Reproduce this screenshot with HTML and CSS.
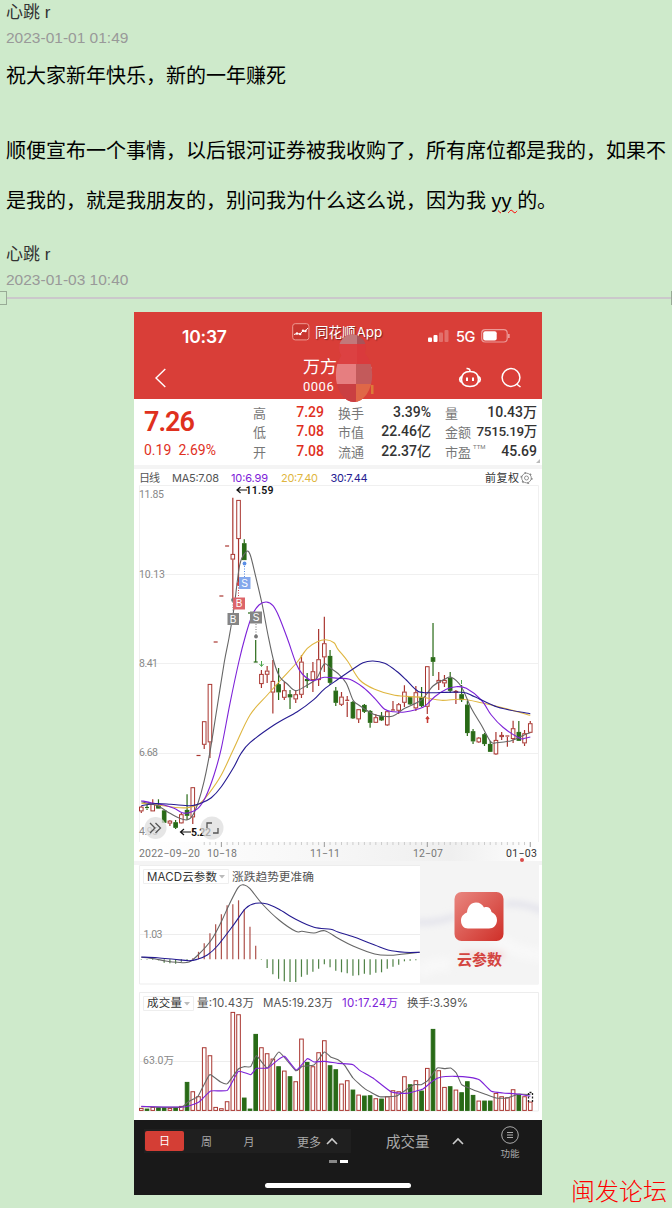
FILE: index.html
```html
<!DOCTYPE html>
<html lang="zh-CN">
<head>
<meta charset="utf-8">
<title>心跳 r</title>
<link rel="stylesheet" href="styles.css">
</head>
<body>
<main class="doc">
  <div class="name">心跳 r</div>
  <div class="date">2023-01-01 01:49</div>
  <p class="para">祝大家新年快乐，新的一年赚死</p>
  <p class="para para-long">顺便宣布一个事情，以后银河证券被我收购了，所有席位都是我的，如果不<br>是我的，就是我朋友的，别问我为什么这么说，因为我 <span class="typo">yy </span>的。</p>
  <div class="name">心跳 r</div>
  <div class="date">2023-01-03 10:40</div>
  <div class="rule"><i class="handle"></i><i class="line"></i><i class="handle end"></i></div>

  <section class="phone">
    <header class="top">
      <div class="status">
        <span class="clock">10:37</span>
        <span class="app">
          <svg width="18" height="18" viewBox="0 0 18 18"><rect x=".7" y=".7" width="16.2" height="16.2" rx="2.5" fill="#c8352f" stroke="#ee9a92"/><path d="M2 11.500l3-1 3 .7 3-3.400 2 .5L16 5" fill="none" stroke="#fff" stroke-width="1"/><g fill="#fff"><circle cx="5" cy="10.500" r="1.200"/><circle cx="8.200" cy="11" r="1.200"/><circle cx="11" cy="7.800" r="1.200"/><circle cx="13.500" cy="8" r="1.200"/></g></svg>
          <b>同花顺<em>App</em></b>
        </span>
        <svg class="signal" width="22" height="14" viewBox="0 0 22 14"><rect x="0" y="8.500" width="4" height="4.500" rx="1" fill="#fff"/><rect x="5.500" y="6" width="4" height="7" rx="1" fill="#fff"/><rect x="11" y="3.500" width="4" height="9.500" rx="1" fill="#e2706b"/><rect x="16.500" y="1" width="4" height="12" rx="1" fill="#e2706b"/></svg>
        <span class="net">5G</span>
        <svg width="30" height="14" viewBox="0 0 30 14"><rect x=".7" y=".7" width="25.500" height="12.300" rx="3.500" fill="none" stroke="#ec9a97" stroke-width="1.200"/><rect x="2.200" y="2.200" width="13.500" height="9.300" rx="2" fill="#fff"/><path d="M27.800 5v4" stroke="#ec9a97" stroke-width="1.800"/></svg>
      </div>
      <div class="titlebar">
        <svg class="back" width="14" height="22" viewBox="0 0 14 22"><path d="M11.300 2L2 11l9.300 9" fill="none" stroke="#fff" stroke-width="1.400"/></svg>
        <div class="stock"><span>万方</span><small>0006</small></div>
        <svg width="24" height="24" viewBox="0 0 24 24" fill="none" stroke="#fff" stroke-width="1.600"><path d="M12 5.500C6 5.500 3.500 9 3.500 13.500S6.500 20.500 12 20.500s8.500-2.500 8.500-7S18 5.500 12 5.500zM3.600 10.500c-2.600 1.200-2.600 4.800.2 5.700M20.400 10.500c2.600 1.200 2.600 4.800-.2 5.700M12 5.500c.3-2-1.200-3.200-3.500-3"/><path d="M9 11.500v3.500M15 11.500v3.500" stroke-width="2"/></svg>
        <svg class="search" width="24" height="24" viewBox="0 0 24 24" fill="none" stroke="#fff" stroke-width="1.500"><circle cx="11" cy="11.500" r="8.900"/><path d="M16.500 18l4 3"/></svg>
      </div>
      <svg class="blob" width="40" height="70" viewBox="335 333 40 70">
        <clipPath id="mask"><circle cx="352.500" cy="348" r="13.500"/><ellipse cx="354" cy="375" rx="18.200" ry="27"/></clipPath>
        <rect x="371" y="385" width="2.500" height="9" fill="#dd7a38"/><path d="M371.500 367v6" stroke="#efa7a3" stroke-dasharray="2 2"/>
        <g clip-path="url(#mask)"><rect x="335" y="333" width="40" height="70" fill="#da3a3c"/><path d="M335 333h22v11h-22z" fill="#c1797b"/><path d="M357 333h16v11h-16z" fill="#a95358"/><path d="M335 344h22v20h-22z" fill="#dc4142"/><path d="M335 364h21v20h-21z" fill="#e67e80"/><path d="M356 364h18v20h-18z" fill="#c35a5b"/><path d="M335 384h21v20h-21z" fill="#ca3f42"/><path d="M356 384h18v20h-18z" fill="#e06747"/></g>
      </svg>
    </header>

    <div class="quote">
      <div class="price"><strong>7.26</strong><span>0.19&ensp;2.69%</span></div>
      <dl class="stats">
        <dt>高</dt><dd class="red">7.29</dd><dt>换手</dt><dd>3.39%</dd><dt>量</dt><dd>10.43万</dd>
        <dt>低</dt><dd class="red">7.08</dd><dt>市值</dt><dd>22.46亿</dd><dt>金额</dt><dd class="tight">7515.19万</dd>
        <dt>开</dt><dd class="red">7.08</dd><dt>流通</dt><dd>22.37亿</dd><dt>市盈<sup>TTM</sup></dt><dd>45.69</dd>
      </dl>
      <i class="corner"></i>
    </div>

    <svg class="chart" id="kline" width="408" height="400" viewBox="134 465 408 400">
      <defs><linearGradient id="axis"><stop offset="0" stop-color="#fff"/><stop offset=".5" stop-color="#f6f6f6"/><stop offset=".78" stop-color="#efefef"/><stop offset="1" stop-color="#fff"/></linearGradient></defs>
      <path d="M134 465h408v4H134z" fill="#f4f4f4"/>
      <path d="M139.500 842V485.500h399V842M139 574.500h400M139 663.500h400M139 753.500h400" fill="none" stroke="#f0f0f0"/>
      <path d="M139 842h400v19H139z" fill="url(#axis)"/><path d="M134 861h408v4H134z" fill="#f4f4f4"/>
      <g class="t" font-size="11">
        <text x="139" y="481.500" textLength="21">日线</text><text x="172" y="481.500" textLength="47">MA5:7.08</text>
        <text x="231" y="481.500" textLength="37" fill="#7d22d8">10:6.99</text><text x="281" y="481.500" textLength="37" fill="#dfb640">20:7.40</text><text x="330.500" y="481.500" textLength="37" fill="#251b91">30:7.44</text>
        <text x="485" y="481.500" textLength="34" fill="#333">前复权</text>
      </g>
      <g fill="none" stroke="#888" stroke-width=".9"><circle cx="526.500" cy="478" r="4.800"/><circle cx="526.500" cy="478" r="5.400" stroke-dasharray="1.800 3.850" stroke-width="1.400"/><circle cx="526.500" cy="478" r="2"/></g>
      <g class="num" fill="#888">
        <text x="139" y="498" textLength="25">11.85</text><text x="139" y="577.500" textLength="26">10.13</text><text x="139" y="667" textLength="19">8.41</text><text x="139" y="756" textLength="19">6.68</text><text x="139" y="835" textLength="19">4.95</text>
      </g>
      <g id="candles"></g><g id="averages"></g>
      <g fill="none" stroke-dasharray="1 1.500"><path d="M244.500 566v11" stroke="#5a8ee6"/><path d="M238.500 585v12" stroke="#c94348"/><path d="M233 602v10M256 624v12" stroke="#777"/></g>
      <circle cx="244.500" cy="563.500" r="1.900" fill="#5a8ee6"/><circle cx="238.500" cy="584" r="1.900" fill="#c94348"/><circle cx="233" cy="600" r="1.900" fill="#777"/><circle cx="256" cy="636.500" r="1.900" fill="#777"/>
      <g class="tag"><path d="M239 577h11.500v12H239z" fill="#84a8ec"/><path d="M233 597.500h12v12h-12z" fill="#dc656a"/><path d="M227.500 613H239v12h-11.500zM250 611.500h12v12h-12z" fill="#858585"/>
        <text x="244.700" y="586.700">S</text><text x="239" y="607.300">B</text><text x="233.200" y="622.700">B</text><text x="256" y="621.200">S</text></g>
      <path d="M261.500 661v5m-2-2l2 2.500 2-2.500M461.500 680v4" fill="none" stroke="#4ca64c"/><path d="M427.500 723v-6m-1.500 2l1.500-2 1.500 2M193 832v-4" fill="none" stroke="#c83c35" stroke-width="1.500"/>
      <g class="num strong"><text x="245.500" y="494" textLength="28">11.59</text><text x="191" y="836" textLength="20">5.22</text></g>
      <g fill="#dedede" fill-opacity=".75"><circle cx="155.500" cy="828" r="11"/><circle cx="212" cy="828" r="11.500"/></g>
      <g fill="none" stroke="#555" stroke-width="1.300"><path d="M150 823l5 5-5 5M155.500 823l5 5-5 5"/><path d="M207 828v-5h5M213 833h5v-5"/></g>
      <path d="M247 490h-10m3.500-3l-3.500 3 3.500 3M191 832h-10.500m3.500-3l-3.500 3 3.500 3" fill="none" stroke="#111" stroke-width="1.200"/>
      <g id="ticks"></g>
      <g class="num" fill="#777"><text x="139" y="857" textLength="61">2022−09−20</text><text x="207" y="857" textLength="30">10−18</text><text x="310" y="857" textLength="30">11−11</text><text x="413" y="857" textLength="30">12−07</text><text x="506" y="857" textLength="31" fill="#333">01−03</text></g>
      <circle cx="522" cy="860" r="2" fill="#d94b49"/>
    </svg>

    <svg class="chart" id="macd" width="408" height="125" viewBox="134 865 408 125">
      <defs><linearGradient id="tile" x2="1" y2="1"><stop stop-color="#e98780"/><stop offset="1" stop-color="#cf2f28"/></linearGradient><filter id="soft"><feGaussianBlur stdDeviation="3"/></filter><clipPath id="promo"><path d="M420 865h119v119H420z"/></clipPath></defs>
      <path d="M139.500 865.500h399v118.500h-399zM139 934.500h281" fill="none" stroke="#ededed"/>
      <path d="M143.500 869.500h85v14h-85z" fill="#fff" stroke="#eee"/>
      <g class="t"><text x="147" y="880.500" textLength="70" fill="#333" font-size="11.500">MACD云参数</text><text x="232" y="880.500" textLength="82" font-size="11.700">涨跌趋势更准确</text></g>
      <path d="M219 875h6l-3 3.500z" fill="#bbb"/><text class="num" x="143.500" y="937.500" textLength="19" fill="#888">1.03</text>
      <g id="macd-bars"></g><g id="macd-lines"></g>
      <g clip-path="url(#promo)"><path d="M420 865h119v119H420z" fill="#f4f4f4"/><g filter="url(#soft)" fill="none"><path d="M415 922q20 2 40-6M505 904q20-2 40 8" stroke="#e3e3eb" stroke-width="6"/><path d="M490 930q20 25 55 25M420 973q15-12 30-7" stroke="#f8f8f8" stroke-width="14"/><path d="M462 955h42" stroke="#f3dfde" stroke-width="8"/></g></g>
      <rect x="454.500" y="892" width="49" height="49" rx="7" fill="url(#tile)"/>
      <path d="M468 928.500c-4.500 0-7-3.500-7-8 0-4 2.500-6.500 6-8 .5-6 4-10 9-10 4 0 6.500 2 8 5 3.500-1.500 7 .5 7.500 4.500 3.500 1.500 5.500 4.500 5.500 8 0 5-3.500 8.500-8 8.500z" fill="#fff"/>
      <text class="t cloud" x="457" y="965" textLength="45" font-size="15">云参数</text>
    </svg>

    <svg class="chart" id="volume" width="408" height="130" viewBox="134 990 408 130">
      <path d="M139.500 1111V992.500h399V1111zM139 1061.500h399" fill="none" stroke="#ededed"/>
      <path d="M143.500 996.500h50v14h-50z" fill="#fff" stroke="#eee"/><path d="M184 1002h6l-3 3.500z" fill="#bbb"/>
      <g class="t" font-size="11.500"><text x="147" y="1007" textLength="35" fill="#333">成交量</text><text x="197" y="1007" textLength="57">量:10.43万</text><text x="263" y="1007" textLength="70">MA5:19.23万</text><text x="342" y="1007" textLength="56" fill="#7d22d8">10:17.24万</text><text x="407" y="1007" textLength="61">换手:3.39%</text></g>
      <text class="num" x="143" y="1064" textLength="31" fill="#888">63.0万</text>
      <g id="volume-bars"></g><g id="volume-lines"></g>
      <path d="M528.500 1102v-9.500h4v9.500" fill="none" stroke="#222" stroke-width="1.300" stroke-dasharray="2 1.500"/>
    </svg>

    <footer class="bottom">
      <div class="bar">
        <div class="periods"><b>日</b><span>周</span><span>月</span><span class="more">更多<svg width="12" height="8" viewBox="0 0 12 8"><path d="M1 7l5-5 5 5" fill="none" stroke="#ccc" stroke-width="1.600"/></svg></span></div>
        <div class="metric">成交量</div>
        <svg class="up" width="12" height="8" viewBox="0 0 12 8"><path d="M1 7l5-5 5 5" fill="none" stroke="#ccc" stroke-width="1.600"/></svg>
        <div class="func"><svg width="18" height="18" viewBox="0 0 18 18" fill="none" stroke="#aaa"><circle cx="9" cy="9" r="8.300"/><path d="M6 6.500h6M6 9h6M6 11.500h6"/></svg><span>功能</span></div>
      </div>
      <div class="pages"><i></i><i class="on"></i></div>
      <div class="home"></div>
    </footer>
  </section>
  <div class="watermark">闽发论坛</div>
</main>
<script src="charts.js"></script>
</body>
</html>
```
FILE: styles.css
```css
* { box-sizing: border-box; }
body { margin: 0; background: #ceeacb; font-family: "Liberation Sans", "Noto Sans CJK SC", sans-serif; }
.doc { position: relative; width: 672px; height: 1208px; padding-top: 1px; overflow: hidden; }
.name { height: 24px; padding-left: 6px; font-size: 17px; line-height: 23px; color: #333; }
.date { height: 26px; padding-left: 6px; font-size: 15.5px; line-height: 26px; color: #999; }
.para { margin: 0; padding-left: 6px; font-size: 20px; line-height: 50px; color: #000; white-space: nowrap; }
.para-long { margin: 25px 0 17px; }
.typo { text-decoration: underline wavy #f00 1px; text-underline-offset: 1px; white-space: pre; }
.rule { display: flex; align-items: center; height: 14px; margin: -2px 0 7px; }
.line { flex: 1; height: 2px; background: #cbc8cb; }
.handle { width: 7px; height: 14px; border: 1px solid #98ab96; border-left: 0; }
.handle.end { width: 1px; border-left: 1px solid #98ab96; border-right: 0; }

.phone { width: 408px; height: 883px; margin-left: 134px; background: #fff; }
.top { position: relative; height: 87px; background: #d93e38; color: #fff; }
.status { display: flex; align-items: center; height: 48px; padding-left: 48px; }
.clock { width: 110px; font: 600 17.500px Inter, sans-serif; letter-spacing: -.2px; }
.app { display: flex; align-items: center; gap: 5px; width: 136px; height: 30px; margin-top: -9px; }
.app b { font: 400 13.500px/18px "Noto Sans CJK SC", sans-serif; text-shadow: 1px 1px 1px #7b2421; }
.app em { margin-left: 1px; font: 400 13.500px/18px Inter, sans-serif; }
.signal { margin-right: 6px; }
.net { width: 25px; font: 500 14.500px Inter, sans-serif; letter-spacing: -.5px; }
.titlebar { display: flex; align-items: center; height: 36px; padding-left: 20px; }
.stock { display: flex; flex-direction: column; width: 154px; height: 42px; margin-left: 135px; font: 17px/24px "Noto Sans CJK SC", sans-serif; }
.stock span { height: 23px; margin-top: -3px; }
.stock small { font: 13px/20px Roboto, sans-serif; letter-spacing: .5px; }
.titlebar .stock + svg { margin-left: 1px; }
.search { margin-left: 18px; }
.blob { position: absolute; left: 201px; top: 21px; z-index: 1; }

.quote { position: relative; display: flex; height: 66px; padding: 4px 5px 0 10px; font-family: Roboto, "Noto Sans CJK SC", sans-serif; }
.price { display: grid; grid-template-rows: 37px 19px; width: 109px; color: #df301e; align-items: center; }
.price strong { font-size: 27px; font-weight: 600; letter-spacing: -1px; }
.price span { font-size: 14px; font-weight: 400; }
.stats { display: grid; grid-template-columns: 24px 47px 43px 64px 41px 65px; grid-template-rows: repeat(3, 19.300px); margin: 0; width: 284px; line-height: 19.300px; }
.stats dt { font: 13px/19.300px "Noto Sans CJK SC", sans-serif; color: #777; white-space: nowrap; }
.stats dt:nth-of-type(3n+2), .stats dt:nth-of-type(3n) { padding-left: 14px; }
.stats dd { margin: 0; font-size: 14px; font-weight: 500; text-align: right; color: #333; white-space: nowrap; }
.stats dd.red { color: #df301e; }
.stats dd.tight { font-size: 13.500px; letter-spacing: -.35px; }
.stats sup { font: 6px/0 Roboto, sans-serif; vertical-align: 8px; margin-left: 2px; }
.corner { position: absolute; right: 2px; bottom: 2px; border: 2px solid #bbb; border-left-color: transparent; border-top-color: transparent; }

.chart { display: block; }
.t { font-family: "Open Sans", "Noto Sans CJK SC", sans-serif; font-family: Inter, "Noto Sans CJK SC", sans-serif; fill: #555; }
.t text:not([fill]) { fill: #555; }
.cloud { fill: #d34440; font-weight: 700; }
.num { font-family: Roboto, "Noto Sans CJK SC", sans-serif; font-size: 10.500px; }
.strong { fill: #111; font-weight: 600; }
.tag { font: 10px "Liberation Sans", sans-serif; text-anchor: middle; }
.tag text { fill: #fff; }

.bottom { height: 75px; background: #191919; color: #aaa; font-family: "Noto Sans CJK SC", sans-serif; }
.bar { display: flex; align-items: center; height: 40px; padding: 2px 0 0 10px; }
.periods { display: flex; align-items: center; width: 207px; height: 24px; padding: 0 1px; background: #1f1f1f; font-size: 11px; }
.periods b { width: 39px; height: 20px; border-radius: 2px; background: #d43e35; color: #fff; font-weight: 400; line-height: 19px; text-align: center; }
.periods span { width: 42.5px; padding-left: 17px; }
.periods .more { display: flex; align-items: center; gap: 5px; width: auto; padding-left: 28px; font-size: 12px; white-space: nowrap; }
.metric { width: 66px; margin-left: 35px; font-size: 14.500px; line-height: 20px; }
.up { margin-right: 34px; }
.func { display: grid; justify-items: center; width: 24px; gap: 2px; padding-top: 3px; font-size: 9.500px; line-height: 14px; white-space: nowrap; }
.pages { display: flex; justify-content: center; gap: 3px; height: 3px; }
.pages i { width: 8px; height: 3px; background: #888; }
.pages .on { background: #fff; }
.home { width: 146px; height: 5px; margin: 20px auto 0; border-radius: 3px; background: #fff; }
.watermark { position: absolute; left: 571px; top: 1174px; font: 300 24px/32px "Noto Sans CJK SC", sans-serif; color: #f00; }
```
FILE: charts.js
```javascript
const NS = 'http://www.w3.org/2000/svg';
const RED = '#a93630', GREEN = '#286a16';
const xAt = i => 141.3 + 5.72 * i;

function add(id, tag, attrs) {
  const el = document.createElementNS(NS, tag);
  for (const k in attrs) el.setAttribute(k, attrs[k]);
  document.getElementById(id).appendChild(el);
}

// Flat list of x,y pairs drawn as a smooth curve.
function curve(id, stroke, flat, smooth = 1) {
  const p = [];
  for (let i = 0; i < flat.length; i += 2) p.push([flat[i], flat[i + 1]]);
  let d = `M${p[0]}`;
  for (let i = 0; i < p.length - 1; i++) {
    const a = p[Math.max(0, i - 1)], b = p[i], c = p[i + 1], e = p[Math.min(p.length - 1, i + 2)];
    const k = smooth / 6;
    d += `C${b[0] + (c[0] - a[0]) * k},${b[1] + (c[1] - a[1]) * k} ${c[0] - (e[0] - b[0]) * k},${c[1] - (e[1] - b[1]) * k} ${c}`;
  }
  add(id, 'path', { d, fill: 'none', stroke, 'stroke-width': 1.1 });
}

// high, body top, body bottom, low, colour
const candles = `806 806.700 811.300 813 r|805 807.500 808.500 810 g|799.300 804 811.300 811.300 r|799.300 805 808.500 808.500 g|810 810.500 822.700 823 g|820 820.700 823.500 826 r|820 822.300 827.700 829 g|813 814.300 823.300 823 r|794.300 810 815.700 820 g|787 787.300 817.300 824 r|755.500 755.500 756.500 756.500 r|721 721.300 744.700 749 r|684 684 742.300 758 r|642 642 643 643 r|596 596 597 597 r|546 546 547 547 r|497.700 554 559.500 600 r|500 500 539 584 r|539.300 543.300 560 560 g|613 613 614 614 g|640 662 663 663 g|670 674 684 688 r|666 670.700 674.700 683 r|660 681 692.500 713.500 r|668 684.300 692.300 700 g|682 690.300 697.700 700 r|690 694.300 697.300 709 g|690 694.300 699.300 703 r|655 661.700 694.700 698 r|673 679 681 688 g|662 671.300 680 692 r|629 659.300 680 686 r|616.700 643.300 657.300 672 r|650 656 682.700 685 g|687 690.700 702.700 706 g|692 696.700 704.700 706 r|696 700.300 701.700 717 r|701 702 718.300 719 g|709 709.300 719.300 723 r|704 705 711.700 713 g|710 711 722.700 727.700 g|714 717.300 722.700 723 r|712 716 720.300 721 g|711 711.300 725.300 726 r|701 710 711 711 r|703 704.300 710.700 714 r|685.300 691.700 702.700 707 r|697 697.300 704.300 705 g|686 692.300 708.300 711 r|687 697 706 707 g|666 666.300 706.700 714 r|623 657.300 661.700 676 g|672 680 682.700 690 r|675 680 683.300 687 r|672 678 690.700 693 g|690 691 692.700 704 r|685 694.300 700 702 g|701 704.700 733 736 g|729 731.300 741.300 744 g|737 737.700 742.300 743 r|733 734.300 744 746 g|741 744 751.700 752 g|732 740 754.300 755 r|732 735 737 740 r|736 736 737 746.700 r|720.700 728.300 739 743 r|721 732 740.700 741 g|730 733.300 743.300 746 r|721 723.300 732.700 733 r`.split('|').map(s => s.split(' '));

candles.forEach(([h, t, b, l, c], i) => {
  const x = xAt(i), red = c === 'r', color = red ? RED : GREEN;
  add('candles', 'path', { d: `M${x} ${h}V${t}M${x} ${b}V${l}`, stroke: color, 'stroke-width': 1.2 });
  if (b - t < 1.5) add('candles', 'path', { d: `M${x - 2} ${t}h4`, stroke: color, 'stroke-width': 1.2 });
  else add('candles', 'rect', { x: x - 1.8, y: +t + .4, width: 3.6, height: b - t - .8, fill: red ? '#fff' : GREEN, stroke: color, 'stroke-width': 1 });
});

curve('averages', '#dfb640', [141.3,803.3,158,805,174,807.3,187.3,807.7,199,804,209,793.3,221.3,775,234,748.3,250,715,267.3,695,280.7,680,297.3,662,307.3,648.3,317.3,641.7,325.7,639.7,334,642.7,338,649.3,348,661.7,359.7,680,374.7,689.3,394.7,695.3,421.3,697.3,441.3,700.3,461.3,699.3,481.3,702.7,504.7,708.3,530.3,715.3]);
curve('averages', '#666', [141.3,801.7,157.3,805.7,167.3,811.7,177.3,817.3,186.7,820,192.3,816,198,803,204,781.7,210,751.7,216.7,710,224.3,662,229,638,234,608,239.7,565,245.7,552.3,250,554.3,255.7,576.7,262.3,605,268,635,274,662,279.7,676.7,287.3,684,295.7,690.7,307.3,685,316.7,678.3,324.3,664,330.7,668.3,338,673.5,346.3,683.3,353,700,358.7,705,373,714,381.3,716,393,716,404.7,708.3,421.3,700,433,686,444.7,679.3,451.3,677.3,461.3,686.7,471.3,708.3,481.3,725,490.7,741.7,496.3,742.7,511.3,740.7,524.7,734.7,530.3,732.7]);
curve('averages', '#7d22d8', [141.3,800.7,152,803,164,805,174,808.3,182.3,812.7,189,812.7,198,808.3,205.7,796.7,214,775,221.3,748.3,230,703.3,238.8,662,245.7,635,252.3,615,259,605,266.3,602,273,605.7,279,616.7,287.3,638.3,296.3,664,302.3,674,312.3,680.7,324.3,677.3,338,678.3,349.7,679.3,363,687.3,374.7,698.3,384.7,709.3,393,711.7,404.7,712,423,707.3,434.7,696.7,446.3,689.3,456.3,686.7,466.3,688.3,481.3,700,491.3,715,503,727.3,519.7,738.3,524.7,738.3,530.3,737]);
curve('averages', '#251b91', [141.3,805.7,154,803.7,170.7,804.3,190.7,805.7,200.7,803.3,211.3,797.7,221.3,786.7,234,766.7,240.7,754,250,742.7,274,725,297.3,711.7,314,699.3,324,689.3,338,679.3,353,669,363,662.7,373,661,384.7,663.3,396.3,671,406.3,680,416.3,690,424.7,692.7,461.3,692.3,474.7,696.7,498,707.3,530.3,713.7]);

for (let i = 11; i <= 68; i++) {
  const major = [14, 32, 50, 68].includes(i);
  add('ticks', 'path', { d: `M${xAt(i)} 842v${major ? 5 : 3}`, stroke: major ? '#999' : '#ccc' });
}

// Positive values hang below the zero line, negative values rise above it.
[.5,.5,.8,1,3.5,4,4.5,2.5,1,-1,-7.5,-16,-26,-35,-45,-54,-55,-59,-50,-32.5,-13.5,.5,8.7,15,19.5,22,22.7,22.7,17.5,15.5,12.5,9.5,5,8,11.5,13,14,16.5,16,14.5,15.5,13.5,13,9.5,7.5,5.5,2,1.5,1]
  .forEach((v, i) => add('macd-bars', 'path', { d: `M${xAt(i)} 959.3v${v}`, stroke: v < 0 ? '#ad514b' : '#4e8145', 'stroke-width': 1.2 }));
curve('macd-lines', '#666', [141.3,957.3,154,958.7,165.7,961,177.3,962.3,189,962,199,954,211.3,940,221.3,921.7,229,905,238.3,887.3,244.3,885,250,888.7,262.3,904,279,920,295.7,931.3,302,931.3,314,933,324.7,930.7,338,938.3,353,946,374.7,954,389.7,955.3,401.3,954.3,419.7,952.3]);
curve('macd-lines', '#251b91', [141.3,957,157.3,957.7,174,959.3,189,960.7,197.3,959.3,207.3,955,217.3,946,234,924.3,245.7,908.3,255.7,903.3,267.3,904,279,909.3,295.7,919.3,314,927.3,330.7,929.3,338,932,354.7,937.3,374.7,945,388,950,404.7,952.3,419.7,952.3]);

// Top edge of each bar, in thirds of a pixel below the pane's origin.
const volumes = [360,362,357,358,358,360,358,354,282,310,325,178,202,357,361,340,72,79,329,362,138,178,196,212,235,248,265,280,152,222,235,193,157,232,244,287,277,305,320,323,322,331,332,325,307,310,265,289,277,308,240,123,247,297,295,305,313,280,321,338,338,338,315,325,328,304,320,325,341];
const greens = [1,3,4,6,8,18,19,20,24,26,29,33,34,37,39,40,42,47,49,51,54,56,57,58,60,61,66];
volumes.forEach((v, i) => {
  const green = greens.includes(i), y = 988 + v / 3;
  add('volume-bars', 'rect', { x: xAt(i) - 1.8, y: y + .4, width: 3.6, height: Math.max(.5, 1110 - y), fill: green ? GREEN : '#fff', stroke: green ? GREEN : RED, 'stroke-width': 1 });
});
const place = (x0, list) => list.map((v, i) => (i % 2 ? 988 : x0) + v / 3);
curve('volume-lines', '#666', [...place(134, [22,356,140,358,165,340,192,325,210,290,228,260,260,282,280,287,313,243,330,236,350,236,367,203,400,240,435,192,485,248,505,235,540,231,571,192,590,207]), ...place(338, [0,215,20,232,45,270,80,302,125,326,175,324,205,305,228,290,250,290,270,277,298,240,320,242,338,240,355,255,371,290,405,305,440,318,474,330,508,330,543,318,577,320])], .4);
curve('volume-lines', '#7d22d8', [...place(134, [22,355,150,357,195,342,230,309,280,307,313,250,350,260,367,241,402,240,430,217,452,205,487,246,520,212,540,222,571,220]), ...place(338, [0,226,45,230,65,247,105,270,160,312,205,316,255,303,285,278,310,267,350,265,395,268,425,276,460,310,495,315,540,318,577,325])], .4);
```
